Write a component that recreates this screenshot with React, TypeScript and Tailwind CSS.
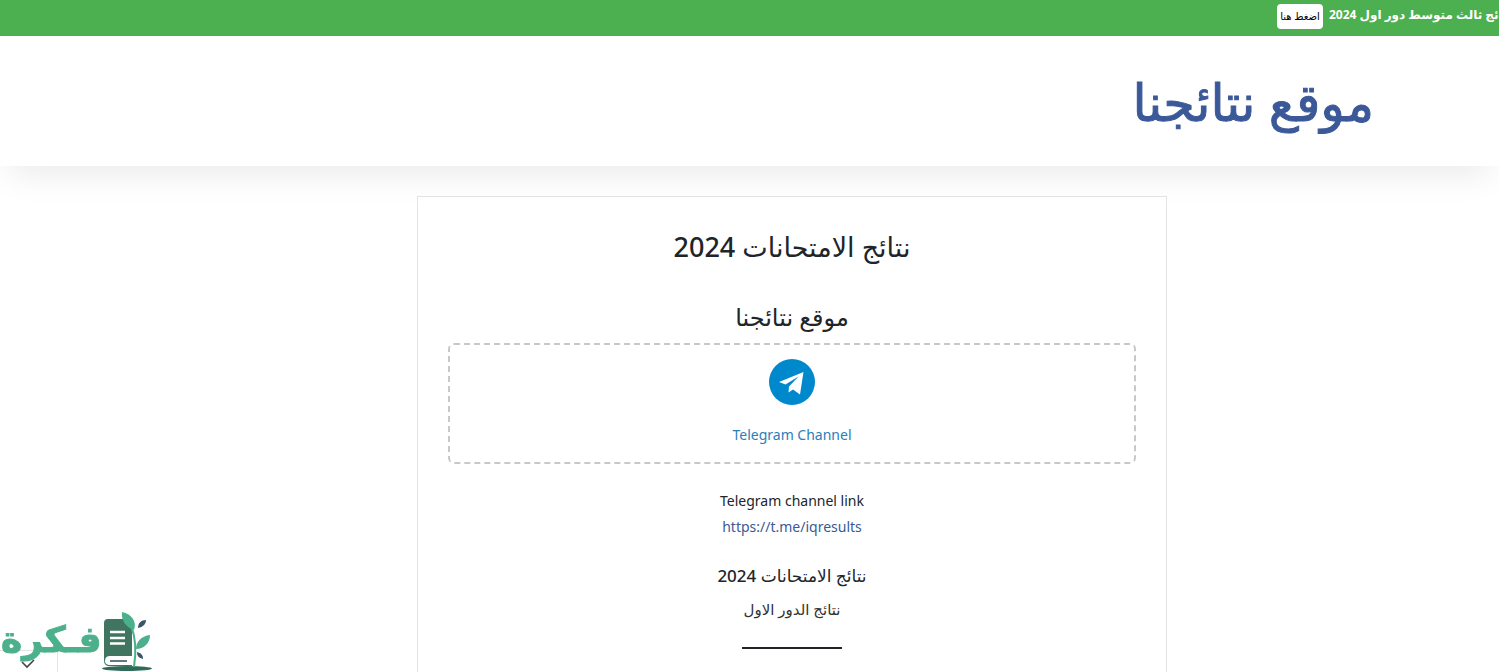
const arabicStack = "font-['Noto_Sans','DejaVu_Sans',sans-serif]";

function TelegramIcon() {
  return (
    <svg width="46" height="46" viewBox="0 0 46 46" aria-hidden="true">
      <circle cx="23" cy="23" r="23" fill="#0088cc" />
      <path d="M10 23 L34.5 13 L31 35.5 L24 30.5 L19.5 33.5 L20 27.5 L29.5 17.5 L16.5 25.5 Z" fill="#fff" />
    </svg>
  );
}

function Logo() {
  return (
    <div className="fixed bottom-0 left-0 h-[60px] w-[152px]">
      <div className="absolute bottom-0 left-0 h-[22px] w-[58px] rounded-tr-[3px] border-r border-t border-[#e4e4e4]" />
      <span className="absolute left-[1px] top-[6px] whitespace-nowrap font-['DejaVu_Sans',sans-serif] text-[36px] font-bold leading-[44px] text-[#4db08c] [-webkit-text-stroke:1px_#4db08c]">
        فـكرة
      </span>
      <svg className="absolute left-[100px] top-0" width="52" height="60" viewBox="0 0 52 60" aria-hidden="true">
        <ellipse cx="27" cy="56.5" rx="25" ry="2.5" fill="#2f6b57" />
        <path d="M4 11 Q4 7 8 7 H24 L32 14 V44 H10 Q5 44 5 49 Q5 53 10 53 H32 V54 H9 Q4 54 4 48 Z" fill="#3f7561" />
        <path d="M10 20 H25 M10 26 H25 M10 31.5 H25" stroke="#fff" strokeWidth="2.4" />
        <path d="M10 49 H27" stroke="#3d5566" strokeWidth="1.6" />
        <path d="M34 55 C36 42 37 28 31 14" stroke="#4db08c" strokeWidth="2" fill="none" />
        <path d="M22 0 C32 2 37 10 34 18 C26 15 21 9 22 0 Z" fill="#4db08c" />
        <path d="M50 23 C50 31 44 37 36 37 C36 30 41 24 50 23 Z" fill="#4db08c" />
        <path d="M46 8 C46 12 43 15 38 16 C38 11 41 8 46 8 Z" fill="#3d5566" />
        <path d="M37 40 C41 41 43 43 43 47 C39 46 37 44 37 40 Z" fill="#3d5566" />
      </svg>
      <svg className="absolute left-[19px] top-[45px]" width="18" height="14" viewBox="0 0 18 14" aria-hidden="true">
        <path d="M3 5 L8 10 L15 3" stroke="#444" strokeWidth="1.6" fill="none" />
      </svg>
    </div>
  );
}

export default function App() {
  return (
    <div className={`relative h-[672px] overflow-hidden bg-white ${arabicStack} text-[#212529]`}>
      <div className="flex h-9 items-start overflow-hidden whitespace-nowrap bg-[#4caf50] pl-[1277px] pt-1 text-white">
        <button
          type="button"
          className="h-[25px] w-[46px] shrink-0 rounded-[4px] bg-white text-center text-[10px] leading-[23px] text-black"
        >
          اضغط هنا
        </button>
        <span dir="rtl" className="ml-[6px] shrink-0 text-[12px] font-bold leading-[22px]">
          نتائج ثالث متوسط دور اول 2024
        </span>
      </div>

      <header className="flex h-[130px] items-center justify-end bg-white pr-[125px] shadow-[0_20px_30px_-10px_rgba(0,0,0,0.08)]">
        <h1 dir="rtl" className="text-[51px] font-normal leading-none text-[#3b5998] [-webkit-text-stroke:1px_#3b5998]">
          موقع نتائجنا
        </h1>
      </header>

      <main className="ml-[417px] mt-[30px] w-[750px] border border-[#e3e3e3] bg-white px-[30px] pt-[30px] text-center">
        <h2 dir="rtl" className="text-[27px] font-medium leading-[40px]">
          نتائج الامتحانات 2024
        </h2>
        <h3 dir="rtl" className="mt-[32px] text-[24px] font-medium leading-[36px]">
          موقع نتائجنا
        </h3>
        <div className="mt-[8px] flex h-[121px] flex-col items-center rounded-[6px] border-2 border-dashed border-[#c8c8c8] pt-[14px]">
          <TelegramIcon />
          <a href="#telegram" className="mt-[18px] text-[14px] leading-[24px] text-[#2980b9]">
            Telegram Channel
          </a>
        </div>
        <div className="mt-[25px] flex flex-col gap-[2px] text-[14px] leading-[24px]">
          <p>Telegram channel link</p>
          <p className="text-[#3b5998]">https://t.me/iqresults</p>
        </div>
        <h4 dir="rtl" className="mt-[22px] text-[17px] font-medium leading-[30px]">
          نتائج الامتحانات 2024
        </h4>
        <p dir="rtl" className="mt-[6px] text-[15px] leading-[24px] text-[#333]">
          نتائج الدور الاول
        </p>
        <hr className="mx-auto mt-[26px] h-[2px] w-[100px] border-0 bg-[#212529]" />
        <div className="h-[60px]" />
      </main>

      <Logo />
    </div>
  );
}
